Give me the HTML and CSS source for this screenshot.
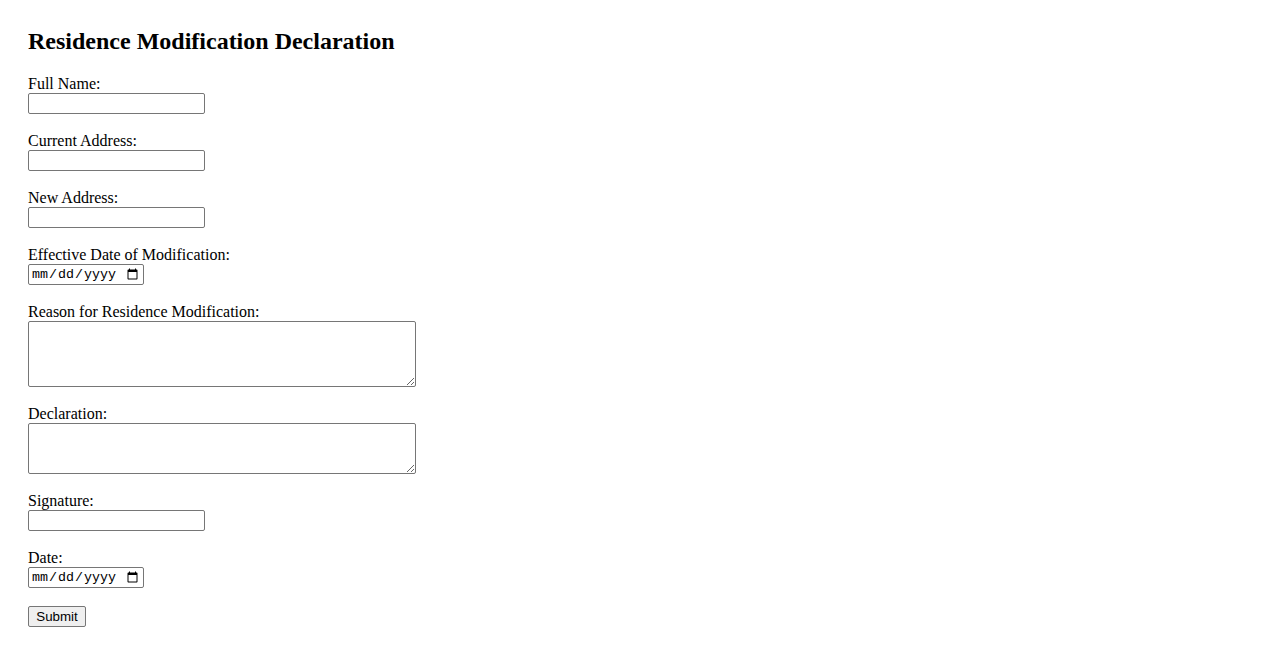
FILE: index.html
```html
<!DOCTYPE html>
<html lang="en">

<head>
  <meta charset="UTF-8" />
  <meta name="viewport" content="width=device-width, initial-scale=1.0" />
  <title>Residence Modification Declaration</title>
  <link rel="stylesheet" href="styles.css">
</head>

<body>
  <div class="container">
    <h2>Residence Modification Declaration</h2>
    <form>
      <div class="form-group">
        <label for="fullName">Full Name:</label>
        <input type="text" id="fullName" name="fullName" />
      </div>
      <div class="form-group">
        <label for="currentAddress">Current Address:</label>
        <input type="text" id="currentAddress" name="currentAddress" />
      </div>
      <div class="form-group">
        <label for="newAddress">New Address:</label>
        <input type="text" id="newAddress" name="newAddress" />
      </div>
      <div class="form-group">
        <label for="effectiveDate">Effective Date of Modification:</label>
        <input type="date" id="effectiveDate" name="effectiveDate" />
      </div>
      <div class="form-group">
        <label for="reason">Reason for Residence Modification:</label>
        <textarea id="reason" name="reason" class="tall"></textarea>
      </div>
      <div class="form-group">
        <label for="declaration">Declaration:</label>
        <textarea id="declaration" name="declaration" class="short"></textarea>
      </div>
      <div class="form-group">
        <label for="signature">Signature:</label>
        <input type="text" id="signature" name="signature" />
      </div>
      <div class="form-group">
        <label for="date">Date:</label>
        <input type="date" id="date" name="date" />
      </div>
      <button type="submit" class="btn">Submit</button>
    </form>
  </div>
</body>

</html>
```

FILE: styles.css
```css
body {
  font-family: "Liberation Serif", "Times New Roman", serif;
  font-size: 16px;
  color: #000;
  background-color: #fff;
  margin: 0;
  padding: 28px;
}

.container h2 {
  margin: 0 0 20px 0;
  font-size: 24px;
  font-weight: bold;
}

.form-group {
  margin-bottom: 18px;
}

label {
  display: block;
}

input,
textarea {
  display: block;
  box-sizing: border-box;
  margin: 0;
  border: 1px solid #767676;
  border-radius: 2px;
  background: #fff;
}

input[type="text"] {
  width: 177px;
  height: 21px;
  padding: 1px 2px;
  font-family: "Liberation Sans", Arial, sans-serif;
  font-size: 13.33px;
}

input[type="date"] {
  width: 116px;
  height: 21px;
  padding: 0 2px;
  font-family: "Liberation Mono", "DejaVu Sans Mono", monospace;
  font-size: 13.33px;
  color: #000;
}

textarea {
  width: 388px;
  padding: 2px;
  resize: vertical;
  font-family: "Liberation Mono", monospace;
  font-size: 13.33px;
}

textarea.tall {
  height: 66px;
}

textarea.short {
  height: 51px;
}

.btn {
  display: block;
  margin: 0;
  width: 58px;
  height: 21px;
  padding: 1px 6px;
  font-family: "Liberation Sans", Arial, sans-serif;
  font-size: 13.33px;
  color: #000;
  background-color: #efefef;
  border: 1px solid #767676;
  border-radius: 2px;
}
```
